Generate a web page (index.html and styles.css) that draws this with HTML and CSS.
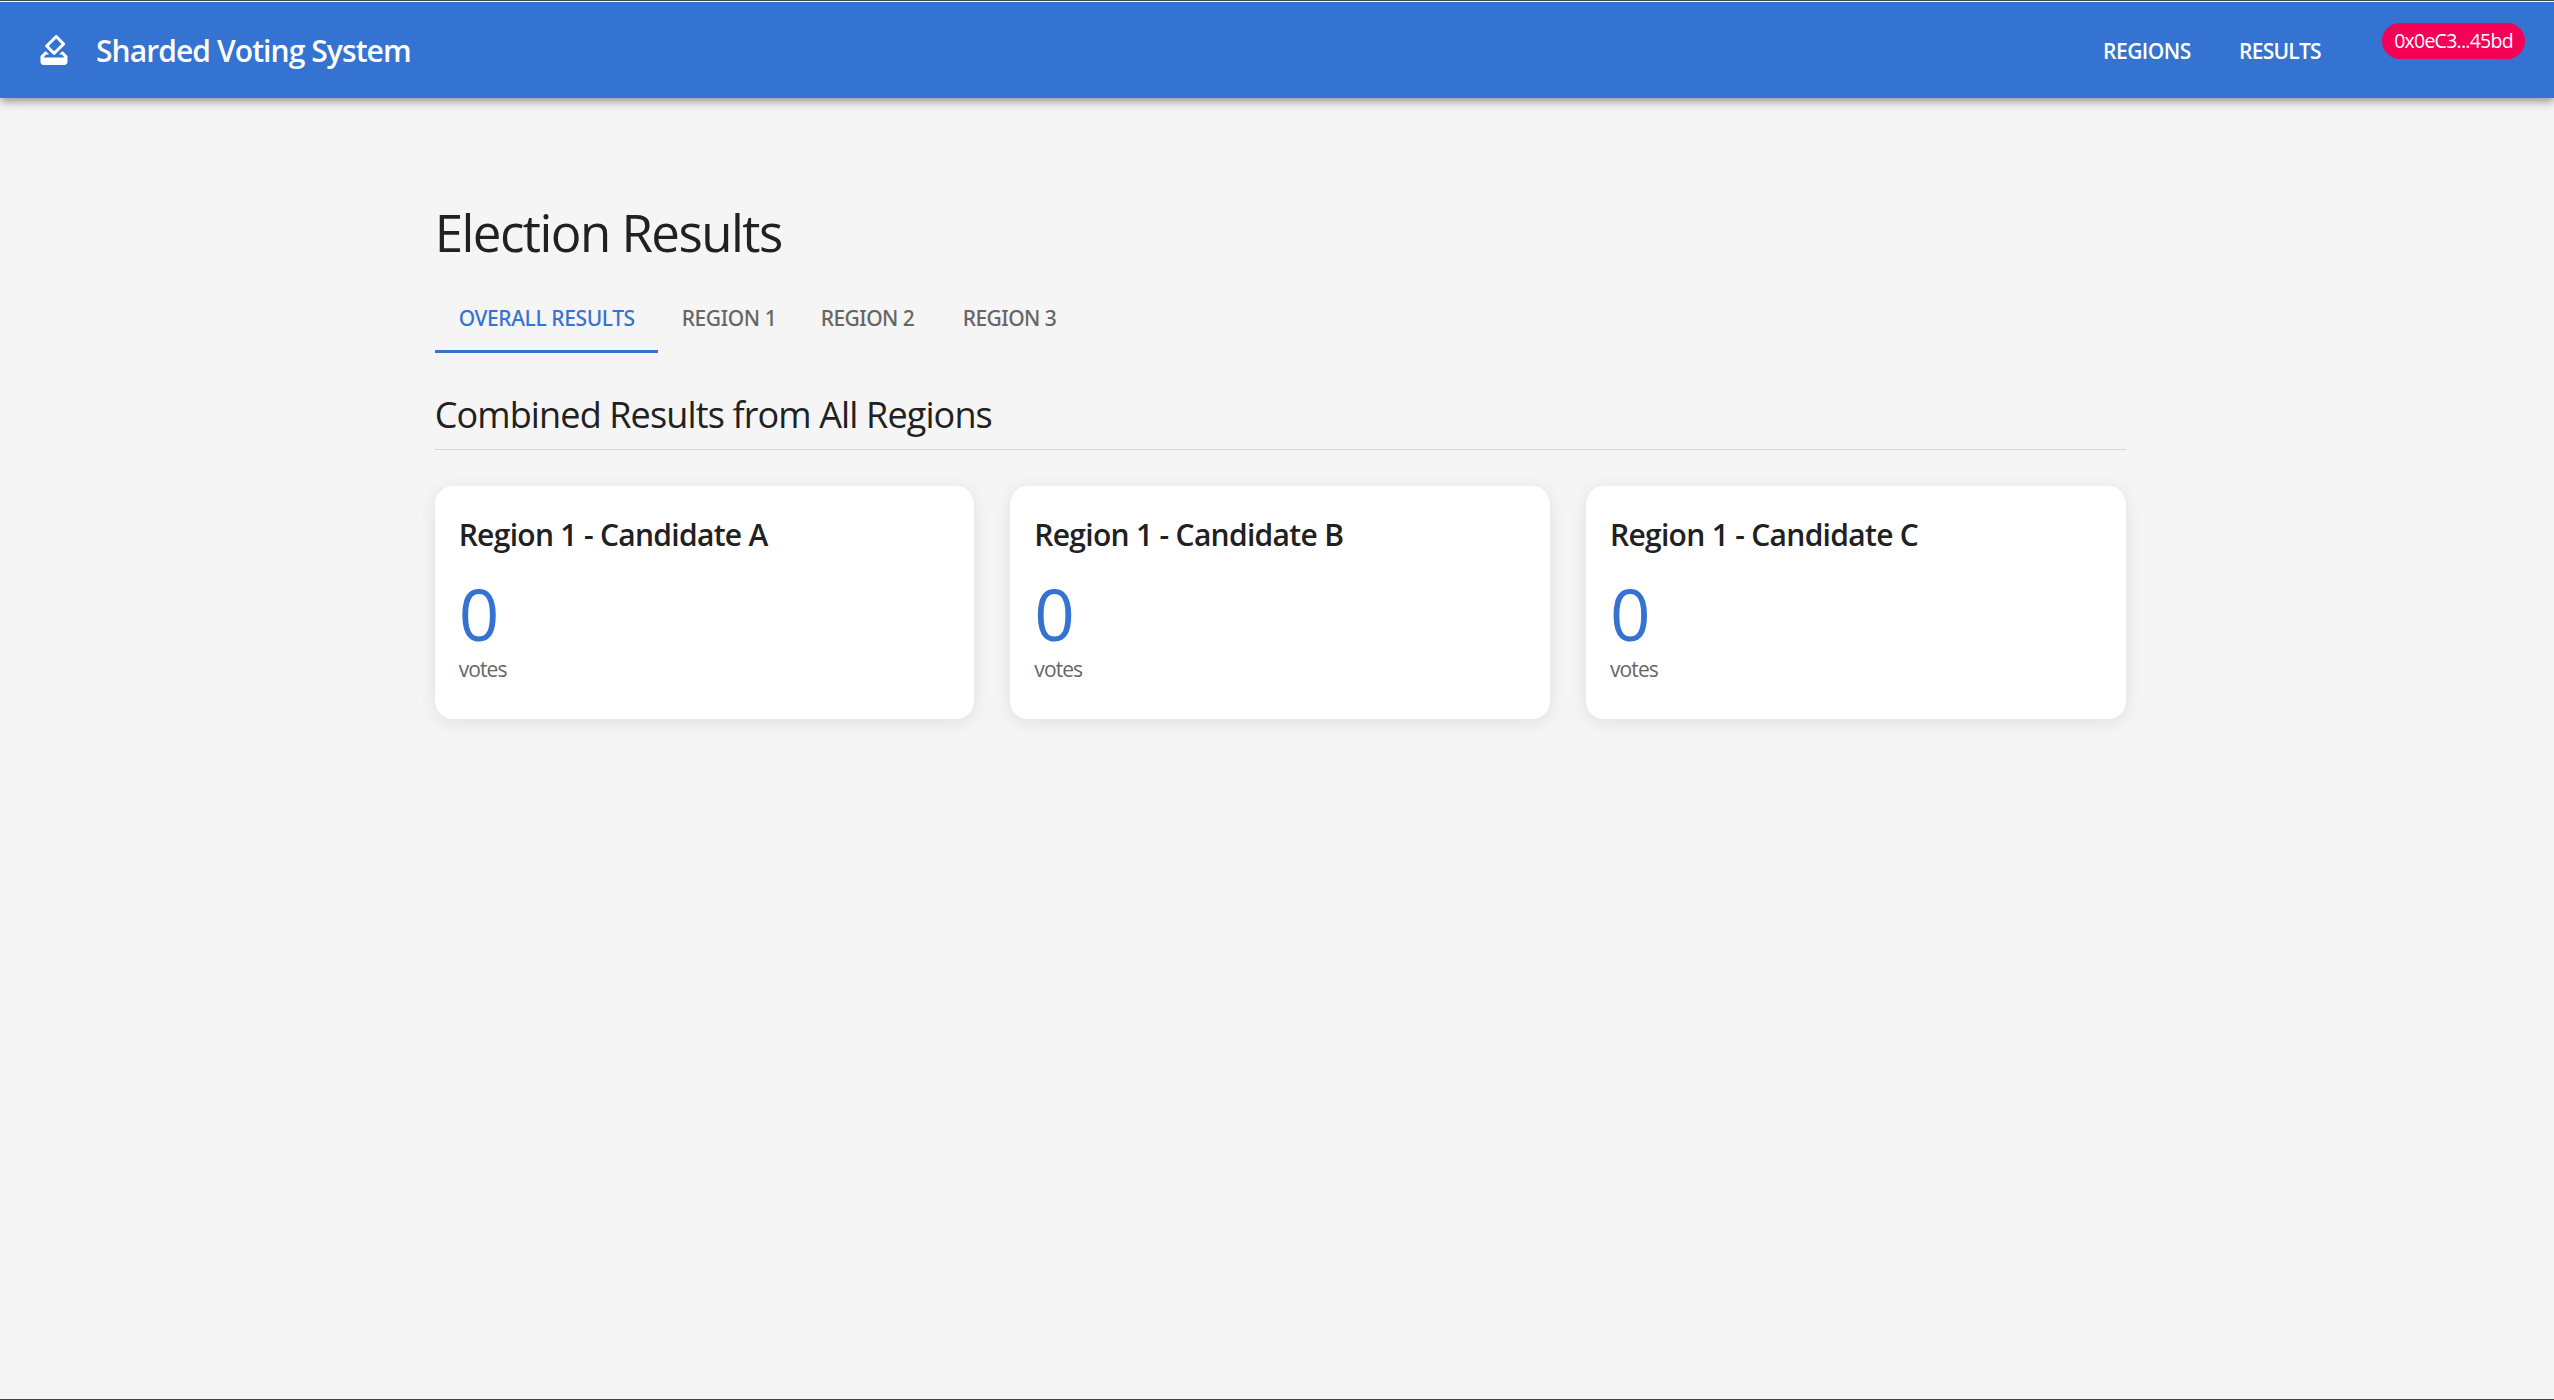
FILE: index.html
```html
<!DOCTYPE html>
<html lang="en">
<head>
<meta charset="utf-8">
<title>Sharded Voting System</title>
<link rel="stylesheet" href="styles.css">
</head>
<body>
<header class="appbar">
  <svg class="logo" viewBox="0 0 24 24" aria-hidden="true"><path d="M18 13h-.68l-2 2h1.91L19 17H5l1.78-2h2.05l-2-2H6l-3 3v4c0 1.1.89 2 1.99 2H19c1.1 0 2-.89 2-2v-4l-3-3zm-1-5.05l-4.95 4.95-3.54-3.54 4.95-4.95L17 7.95zm-4.24-5.66L6.39 8.66c-.39.39-.39 1.02 0 1.41l4.95 4.95c.39.39 1.02.39 1.41 0l6.36-6.36c.39-.39.39-1.02 0-1.41L14.16 2.3c-.38-.4-1.01-.4-1.4-.01z"/></svg>
  <div class="brand">Sharded Voting System</div>
  <nav class="nav">
    <a class="nav-link nav-regions">REGIONS</a>
    <a class="nav-link nav-results">RESULTS</a>
  </nav>
  <span class="chip">0x0eC3...45bd</span>
</header>
<main class="container">
  <h1 class="page-title">Election Results</h1>
  <div class="tabs">
    <div class="tab tab-overall active">OVERALL RESULTS</div>
    <div class="tab tab-first">REGION 1</div>
    <div class="tab">REGION 2</div>
    <div class="tab">REGION 3</div>
  </div>
  <h2 class="section-title">Combined Results from All Regions</h2>
  <section class="cards">
    <article class="card">
      <h3 class="candidate">Region 1 - Candidate A</h3>
      <div class="count">0</div>
      <div class="unit">votes</div>
    </article>
    <article class="card">
      <h3 class="candidate">Region 1 - Candidate B</h3>
      <div class="count">0</div>
      <div class="unit">votes</div>
    </article>
    <article class="card">
      <h3 class="candidate">Region 1 - Candidate C</h3>
      <div class="count">0</div>
      <div class="unit">votes</div>
    </article>
  </section>
</main>
</body>
</html>
```
FILE: styles.css
```css
* { box-sizing: border-box; }

body {
  margin: 0;
  height: 1400px;
  overflow: hidden;
  display: flex;
  flex-direction: column;
  background: #f5f5f5;
  border-top: 1px solid #47484d;
  border-bottom: 1px solid #424242;
  color: #212121;
  font-family: "Open Sans", "Noto Sans", sans-serif;
}

h1, h2, h3 { margin: 0; }

.appbar {
  flex: none;
  height: 97px;
  border-top: 1px solid #fff;
  padding: 0 29px 0 36px;
  display: flex;
  align-items: center;
  background: #3473d1;
  color: #fff;
  box-shadow: 0 3px 6px -1.5px rgba(0, 0, 0, .2), 0 6px 7.5px rgba(0, 0, 0, .14), 0 1.5px 15px rgba(0, 0, 0, .12);
}

.logo { width: 36px; height: 36px; fill: currentColor; }

.brand {
  margin-left: 24px;
  padding-top: 2px;
  flex: 1;
  font-size: 30px;
  font-weight: 600;
  line-height: 48px;
  letter-spacing: -.92px;
}

.nav { display: flex; padding-top: 2px; }

.nav-link {
  font-size: 21px;
  font-weight: 600;
  line-height: 36px;
}

.nav-regions { width: 136px; letter-spacing: -.5px; }
.nav-results { width: 143px; letter-spacing: -.74px; }

.chip {
  align-self: flex-start;
  margin-top: 21px;
  width: 143px;
  height: 36px;
  border-radius: 18px;
  background: #f50057;
  text-align: center;
  font-size: 19.5px;
  line-height: 35px;
  letter-spacing: -.75px;
}

.container {
  width: 1691px;
  margin-left: 434.67px;
  padding-top: 103px;
}

.page-title {
  font-size: 51px;
  font-weight: 400;
  line-height: 62px;
  letter-spacing: -1.53px;
}

.tabs {
  display: flex;
  height: 72px;
  margin-top: 18px;
}

.tab {
  padding: 2px 24px 0;
  width: 142px;
  font-family: "Noto Sans", "Open Sans", sans-serif;
  font-size: 21px;
  font-weight: 500;
  line-height: 70px;
  letter-spacing: -.55px;
  white-space: nowrap;
  color: #666;
}

.tab-overall { width: 223px; letter-spacing: -.39px; }
.tab-first { width: 139px; letter-spacing: -.4px; }

.active {
  color: #3473d1;
  border-bottom: 3px solid #3473d1;
}

.section-title {
  margin-top: 38px;
  height: 59px;
  border-bottom: 1px solid #d6d6d6;
  font-size: 36px;
  font-weight: 400;
  line-height: 48px;
  letter-spacing: -.87px;
}

.cards {
  display: grid;
  grid-template-columns: repeat(3, 1fr);
  gap: 36px;
  margin-top: 36px;
}

.card {
  height: 233px;
  padding: 25px 24px 23px;
  border-radius: 18px;
  background: #fff;
  box-shadow: 0 3px 18px rgba(0, 0, 0, .09);
}

.candidate {
  font-size: 30px;
  font-weight: 600;
  line-height: 48px;
  letter-spacing: -.7px;
}

.count {
  margin-top: 13px;
  font-size: 71px;
  font-weight: 400;
  line-height: 84px;
  color: #3473d1;
}

.unit {
  font-size: 21px;
  font-weight: 400;
  line-height: 27px;
  letter-spacing: -.9px;
  color: #666;
}
```
